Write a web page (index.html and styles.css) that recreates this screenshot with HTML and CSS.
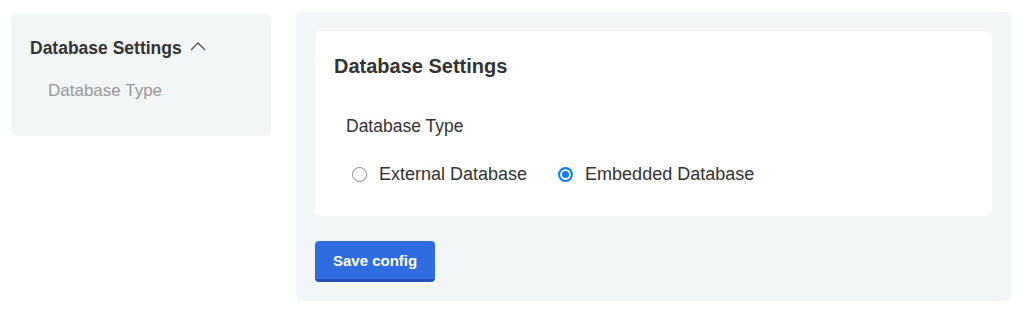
FILE: index.html
```html
<!DOCTYPE html>
<html lang="en">
<head>
  <meta charset="UTF-8" />
  <meta name="viewport" content="width=device-width, initial-scale=1.0" />
  <title>Database Settings</title>
  <link rel="stylesheet" href="styles.css">
</head>
<body>
  <div class="layout">
    <aside class="sidebar">
      <div class="sidebar-title">
        Database Settings
        <svg class="chevron" width="16" height="9" viewBox="0 0 16 9">
          <polyline points="1,8 8,1 15,8" fill="none" stroke="#555" stroke-width="1.4" />
        </svg>
      </div>
      <div class="sidebar-item">Database Type</div>
    </aside>

    <main class="panel">
      <section class="card">
        <h2>Database Settings</h2>
        <div class="field">
          <div class="field-label">Database Type</div>
          <div class="radio-group">
            <label class="option">
              <span class="radio"></span>
              External Database
            </label>
            <label class="option">
              <span class="radio checked"></span>
              Embedded Database
            </label>
          </div>
        </div>
      </section>
      <button class="save">Save config</button>
    </main>
  </div>
</body>
</html>
```

FILE: styles.css
```css
body {
  font-family: "Liberation Sans", Arial, sans-serif;
  background: #ffffff;
  color: #333;
  margin: 0;
  padding: 0;
}

.layout {
  display: flex;
  align-items: flex-start;
  gap: 25px;
  padding: 12px 16px 0 11px;
}

.sidebar {
  width: 260px;
  flex-shrink: 0;
  margin-top: 2px;
  background: #f3f6f7;
  border-radius: 6px;
  padding: 22px 19px 33px;
  box-sizing: border-box;
}

.sidebar-title {
  display: flex;
  align-items: center;
  gap: 8px;
  font-size: 17.5px;
  font-weight: bold;
  line-height: 24px;
  color: #333;
}

.chevron {
  margin-top: -3px;
}

.sidebar-item {
  margin-top: 19px;
  padding-left: 18px;
  font-size: 17px;
  line-height: 24px;
  color: #999;
}

.panel {
  flex: 1;
  background: #f3f6f7;
  border-radius: 6px;
  padding: 19px;
}

.card {
  background: #fff;
  border-radius: 6px;
  padding: 21px 19px 30px;
}

.card h2 {
  margin: 0;
  font-size: 20px;
  line-height: 28px;
  font-weight: bold;
  color: #333;
}

.field {
  margin-top: 34px;
  padding-left: 12px;
}

.field-label {
  font-size: 17.5px;
  line-height: 24px;
  color: #333;
}

.radio-group {
  display: flex;
  gap: 25px;
  margin-top: 24px;
}

.option {
  display: flex;
  align-items: center;
  gap: 12px;
  font-size: 18px;
  line-height: 24px;
  color: #333;
}

.radio {
  width: 15px;
  height: 15px;
  margin-left: 6px;
  border: 1px solid #8a8a8a;
  border-radius: 50%;
  box-sizing: border-box;
  background: #fff;
}

.radio.checked {
  border: 2px solid #0a7cff;
  background: #0a7cff;
  box-shadow: inset 0 0 0 2px #fff;
}

.save {
  margin-top: 25px;
  height: 41px;
  padding: 0 18px;
  background: #2f6ce0;
  color: #fff;
  border: none;
  border-bottom: 3px solid #2350b3;
  border-radius: 4px;
  font-family: "Liberation Sans", Arial, sans-serif;
  font-size: 15px;
  font-weight: bold;
  cursor: pointer;
}
```
